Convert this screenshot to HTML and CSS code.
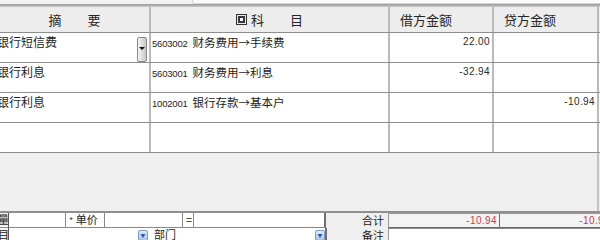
FILE: index.html
```html
<!DOCTYPE html>
<html lang="zh-CN">
<head>
<meta charset="utf-8">
<title>凭证</title>
<link rel="stylesheet" href="styles.css">
</head>
<body>
<div class="screen">
  <div class="topstrip"><div class="topbox"></div></div>
  <div class="topline"></div>

  <div class="grid">
    <div class="row head">
      <div class="c c1 hc center">摘　　要</div>
      <div class="c c2 hc center">
        <svg class="hicon" width="11" height="11" viewBox="0 0 11 11"><rect x="0.5" y="0.5" width="10" height="10" fill="#e8e8e8" stroke="#333"/><rect x="2" y="2" width="7" height="7" fill="#3a3a3a"/><rect x="4" y="4" width="3" height="3" fill="#f4f4f4"/></svg>
        <span>科　　目</span>
      </div>
      <div class="c c3 hc pad">借方金额</div>
      <div class="c c4 hc pad">贷方金额</div>
    </div>

    <div class="row body">
      <div class="c c1 txt first">
        <span class="clip">银行短信费</span>
        <span class="dropbtn"><svg width="10" height="25" viewBox="0 0 10 25"><defs><linearGradient id="g" x1="0" y1="0" x2="1" y2="0"><stop offset="0" stop-color="#f6f6f6"/><stop offset="1" stop-color="#c4c4c4"/></linearGradient></defs><rect x="0.5" y="0.5" width="9" height="24" rx="1.5" fill="url(#g)" stroke="#8a8a8a"/><path d="M2 10 L8 10 L5 13 Z" fill="#111"/></svg></span>
      </div>
      <div class="c c2 txt"><span class="code">5603002</span>财务费用→手续费</div>
      <div class="c c3 num">22.00</div>
      <div class="c c4 num"></div>
    </div>

    <div class="row body">
      <div class="c c1 txt first"><span class="clip">银行利息</span></div>
      <div class="c c2 txt"><span class="code">5603001</span>财务费用→利息</div>
      <div class="c c3 num">-32.94</div>
      <div class="c c4 num"></div>
    </div>

    <div class="row body">
      <div class="c c1 txt first"><span class="clip">银行利息</span></div>
      <div class="c c2 txt"><span class="code">1002001</span>银行存款→基本户</div>
      <div class="c c3 num"></div>
      <div class="c c4 num">-10.94</div>
    </div>

    <div class="row body">
      <div class="c c1 txt"></div>
      <div class="c c2 txt"></div>
      <div class="c c3 num"></div>
      <div class="c c4 num"></div>
    </div>
  </div>

  <div class="blank"></div>

  <div class="panel">
    <div class="prow">
      <div class="plab cut"><span>数量</span></div>
      <div class="pin w57"></div>
      <div class="plab2 w38"><span class="star">*</span> 单价</div>
      <div class="pin w77"></div>
      <div class="plab2 w10">=</div>
      <div class="pin w131 strong"></div>
      <div class="slab">合计</div>
      <div class="sumbox">
        <div class="scell s1">-10.94</div>
        <div class="scell s2">-10.94</div>
      </div>
    </div>
    <div class="prow r2">
      <div class="plab cut"><span>项目</span></div>
      <div class="pin w129 nob"></div>
      <span class="dd"><svg width="10" height="11" viewBox="0 0 10 11"><defs><linearGradient id="b" x1="0" y1="0" x2="0" y2="1"><stop offset="0" stop-color="#e4eefb"/><stop offset="1" stop-color="#a7c2e6"/></linearGradient></defs><rect x="0.5" y="0.5" width="9" height="10" rx="1.5" fill="url(#b)" stroke="#7f9cc0"/><path d="M2.5 4 L7.5 4 L5 8 Z" fill="#2d58a8"/></svg></span>
      <div class="plab3 w34">部门</div>
      <div class="pin w133 nob"></div>
      <span class="dd"><svg width="10" height="11" viewBox="0 0 10 11"><rect x="0.5" y="0.5" width="9" height="10" rx="1.5" fill="url(#b)" stroke="#7f9cc0"/><path d="M2.5 4 L7.5 4 L5 8 Z" fill="#2d58a8"/></svg></span>
      <div class="vline"></div>
      <div class="slab">备注</div>
      <div class="notebox"></div>
    </div>
  </div>
</div>
</body>
</html>
```

FILE: styles.css
```css
html, body {
  margin: 0;
  padding: 0;
}
body {
  background: #efefef;
  font-family: "Noto Sans CJK SC", "Liberation Sans", sans-serif;
  color: #222;
  width: 600px;
  height: 240px;
  overflow: hidden;
}
.screen {
  width: 600px;
  height: 240px;
  overflow: hidden;
}
.topstrip {
  height: 4px;
  background: #f2f2f2;
  display: flex;
  justify-content: flex-end;
}
.topbox {
  width: 407px;
  height: 3px;
  background: #fbfbfb;
  border-left: 1px solid #d6d6d6;
  border-bottom: 1px solid #d6d6d6;
  border-bottom-left-radius: 3px;
}
.topline {
  height: 3px;
  background: linear-gradient(#9a9a9a, #b4b4b4 60%, #d2d2d2);
}
.grid {
  width: 600px;
}
.row {
  display: flex;
  border-bottom: 1px solid #8e8e8e;
  box-sizing: border-box;
}
.head {
  height: 26px;
  background: #ededed;
}
.body {
  height: 30px;
  background: #fff;
}
.c {
  box-sizing: border-box;
  border-right: 2px solid #bababa;
  overflow: hidden;
  flex: none;
}
.c1 { width: 151px; }
.c2 { width: 239px; }
.c3 { width: 104px; }
.c4 { width: 105px; }
.hc {
  display: flex;
  align-items: center;
  font-size: 13px;
  color: #262626;
}
.center { justify-content: center; }
.pad { padding-left: 10px; }
.hicon {
  margin-right: 4px;
  flex: none;
}
.txt {
  font-size: 11.5px;
  line-height: 14px;
  padding-top: 2px;
  color: #1c1c1c;
}
.first {
  display: flex;
  align-items: flex-start;
}
.clip {
  flex: 1;
  margin-left: -3px;
  white-space: nowrap;
  font-size: 12px;
}
.dropbtn {
  flex: none;
  margin-top: 2px;
  margin-right: 2px;
  display: flex;
}
.c2.txt {
  padding-left: 1px;
}
.code {
  font-family: "Liberation Sans", sans-serif;
  font-size: 9.5px;
  letter-spacing: -0.2px;
  margin-right: 5px;
}
.num {
  font-family: "Liberation Sans", sans-serif;
  font-size: 10px;
  letter-spacing: 0.4px;
  text-align: right;
  padding-right: 2px;
  padding-top: 3px;
  color: #2a2a2a;
}
.blank {
  height: 58px;
  width: 599px;
  box-sizing: border-box;
  border-right: 2px solid #c4c4c4;
}
.panel {
  border-top: 2px solid #8f8f8f;
}
.prow {
  display: flex;
  height: 15px;
  box-sizing: border-box;
  font-size: 11px;
  line-height: 13px;
}
.prow > * {
  flex: none;
  box-sizing: border-box;
}
.plab {
  width: 9px;
  height: 15px;
  border-right: 1px solid #555;
  background: #f2f2f2;
  overflow: hidden;
  display: flex;
  justify-content: flex-end;
  border-bottom: 1px solid #8a8a8a;
  font-size: 11px;
  line-height: 13px;
}
.r2 .plab {
  border-bottom: none;
}
.plab span {
  white-space: nowrap;
  margin-right: -1px;
}
.pin {
  background: #fff;
  border-right: 1px solid #8a8a8a;
  border-bottom: 1px solid #8a8a8a;
  height: 15px;
}
.pin.nob {
  border-right: none;
  border-bottom: none;
}
.pin.strong {
  border-right: 2px solid #6f6f6f;
}
.plab2 {
  background: #fff;
  border-right: 1px solid #8a8a8a;
  border-bottom: 1px solid #8a8a8a;
  padding-left: 3px;
  white-space: nowrap;
  overflow: hidden;
}
.plab3 {
  background: #fff;
  padding-left: 6px;
  white-space: nowrap;
}
.star {
  font-size: 9px;
  color: #444;
}
.w57 { width: 57px; }
.w38 { width: 39px; }
.w77 { width: 78px; }
.w10 { width: 11px; }
.w131 { width: 132px; }
.w129 { width: 129px; }
.w34 { width: 34px; }
.w133 { width: 133px; }
.slab {
  width: 62px;
  text-align: right;
  padding-right: 4px;
  padding-top: 1px;
  background: #efefef;
  overflow: hidden;
}
.sumbox {
  display: flex;
  width: 224px;
  height: 15px;
  border-top: 1px solid #9a9a9a;
  border-left: 1px solid #9a9a9a;
  border-bottom: 1px solid #6a6a6a;
  background: #f3f3f3;
}
.scell {
  box-sizing: border-box;
  font-family: "Liberation Sans", sans-serif;
  font-size: 10px;
  letter-spacing: 0.4px;
  color: #c8404f;
  text-align: right;
  padding-right: 2px;
  line-height: 13px;
}
.s1 {
  width: 111px;
  border-right: 1px solid #707070;
}
.s2 {
  width: 112px;
}
.dd {
  display: flex;
  align-items: flex-start;
  padding-top: 2px;
  background: #fff;
  width: 10px;
}
.vline {
  width: 2px;
  background: #6f6f6f;
  height: 15px;
}
.r2 .slab {
  width: 61px;
}
.notebox {
  width: 220px;
  background: #fff;
  border-top: 1px solid #8a8a8a;
  border-left: 1px solid #9a9a9a;
  height: 15px;
}
```
